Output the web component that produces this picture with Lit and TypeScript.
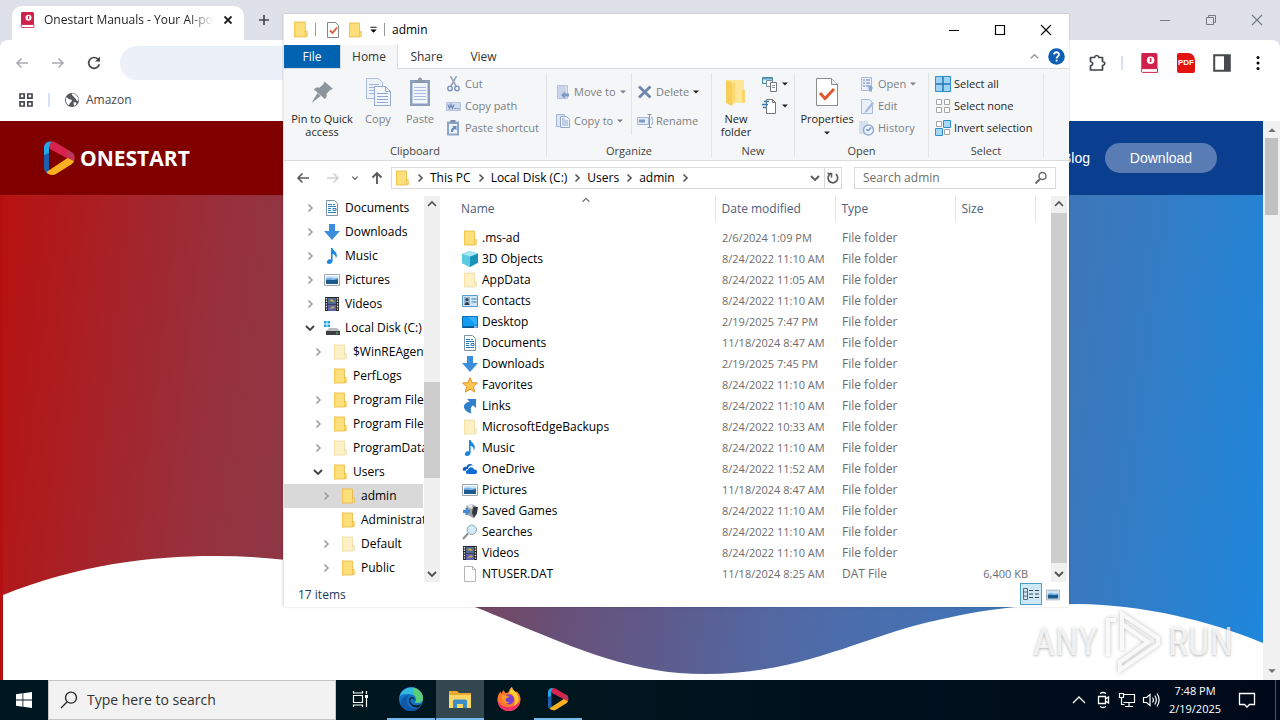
import { LitElement, html, css, svg, nothing } from "lit";
import { customElement } from "lit/decorators.js";
import { classMap } from "lit/directives/class-map.js";

/* ---------- icons, each drawn in its own view box ---------- */
const folder = (a: string, b: string, c: string) => svg`
  <path d="M2 1h10.500v14H2z" fill="${a}"/>
  <path d="M2 15V1h1.200v14z" fill="${b}"/>
  <path d="M12.500 9.500h1.800v5.200h-1.800z" fill="${a}" stroke="${c}" stroke-width=".7"/>
  <path d="M2 1h10.500v9M2 15h10.500" fill="none" stroke="${c}" stroke-width=".8"/>`;

const film = svg`<path d="M1 1h14v14H1z" fill="#222"/><path d="M4 2h8v6H4z" fill="#4d6d96"/><path d="M4 8.500h8V15H4z" fill="#5a62b0"/>
  <path d="M5 5l3-2 3 3zM5 13l4-3 2 2z" fill="#d9a93b"/>
  <path d="M2.500 2v13M13.500 2v13" stroke="#e8e8e8" stroke-width="1.400" stroke-dasharray="1.400 1.200"/>`;

const playMark = svg`
  <path d="M11 1.500C6 1 3 3.500 3 8v18c0 4 2 7 5 8V8z" fill="#22a7e8"/>
  <path d="M3 15v11c0 4 2 7 5 8V13z" fill="#1b5fae"/>
  <path d="M8.500 9c0-3.500 0-6 2.500-7.500 1.500 0 2.500.2 4 1L31 12.500c3 2 3.500 6 1.500 9l-7-3.500z" fill="#d8234f"/>
  <path d="M26 15l6.500 6.500c1.500-3 1-7-1.500-9l-4-2.500z" fill="#b9385a"/>
  <path d="M5.500 32l21-14 6.500 3c-.5 1.500-1.500 2.500-2.500 3.200L15 34c-3.500 1.800-7.500 1-9.500-2z" fill="#fbb01f"/>
  <path d="M8.500 9L25.500 18 8.500 28.500z" fill="var(--hole,#800000)"/>`;

const onestartManual = svg`<path d="M2 0h10.500q1.500 0 1.500 1.500V13H1V1.500Q1 0 2 0z" fill="#cf2149"/>
  <path d="M2 12.500h12v3H2q-1-.2-1-1.500t1-1.500z" fill="#fff" stroke="#cf2149" stroke-width=".8"/>
  <circle cx="8.500" cy="5.800" r="3" fill="#fff"/><path d="M8.500 4v3.200" stroke="#cf2149" stroke-width="1.200"/>`;

const icons: Record<string, [string, unknown]> = {
  folder: ["0 0 16 16", folder("#ffdf7c", "#f5c84c", "#e8b93c")],
  folderPale: ["0 0 16 16", folder("#fdf0c4", "#f6e4a8", "#eadba6")],
  documents: ["0 0 16 16", svg`<path d="M2.500 .5h8l3 3v12h-11z" fill="#fff" stroke="#7e93a6"/><path d="M4 4.500h4M4 6.500h8M4 10.500h3M4 12.500h8M9 4.500h2" stroke="#2a80bd"/><path d="M4 8.500h3M9 8.500h3v2H9z" stroke="#2a80bd" fill="none"/>`],
  downloads: ["0 0 16 16", svg`<path d="M5 0h6v7h5l-8 9-8-9h5z" fill="#3b8ede"/>`],
  music: ["0 0 16 16", svg`<path d="M7 0h1.600c.4 2.800 4.400 3.500 4.200 7.600 0 1.300-.6 2.400-1.200 3.200.4-2.800-.4-4.200-3-5V13c0 2-1.800 3-3.600 3S2.600 14.800 3 13.200c.5-1.700 2.400-2.300 4-1.900z" fill="#1b87e0"/>`],
  pictures: ["0 0 16 16", svg`<path d="M.5 2.500h15v11H.5z" fill="#fff" stroke="#9aa3ab"/><path d="M2 4h12v8H2z" fill="#7fb9ee"/><path d="M2 8c4-1 6 1 12-1v5H2z" fill="#1d5b8f"/><path d="M2 6q4-1 7 0 3 .8 5-.5V4H2z" fill="#cfe5f7"/>`],
  videos: ["0 0 16 16", film],
  disk: ["0 0 16 16", svg`<path d="M0 1h2.600v2.600H0zM3.400 1H6v2.600H3.400zM0 4.400h2.600V7H0zM3.400 4.400H6V7H3.400z" fill="#1aa7e6"/><path d="M5 8h8l3 3H2z" fill="#b8bcc0"/><path d="M2 11h14v4H2z" fill="#3c4043"/><path d="M12 12.500h2v1h-2z" fill="#5be05b"/>`],
  cube: ["0 0 16 16", svg`<path d="M0 3l7-3 9 2.500v9L8 16 0 12z" fill="#35b8d6"/><path d="M0 3l8 2.500V16L0 12z" fill="#59cbe0"/><path d="M8 5.500l8-3v9L8 16z" fill="#1a93b8"/><path d="M0 3l7-3 9 2.500-8 3z" fill="#a5e6f2"/>`],
  contacts: ["0 0 16 16", svg`<path d="M.5 2.500h15v11H.5z" fill="#cfe6f8" stroke="#5b9bd1"/><path d="M2 4h6v8H2z" fill="#8fb7d6"/><circle cx="5" cy="6.500" r="1.600" fill="#444"/><path d="M2.500 12q2.500-6 5 0z" fill="#333"/><path d="M9.500 6h5M9.500 9h5" stroke="#3a7db8"/>`],
  desktop: ["0 0 16 16", svg`<path d="M.5 2.500h15v11H.5z" fill="#139af2" stroke="#0b6cb3"/><path d="M1 13h14" stroke="#0a3a6a"/><path d="M6 3h9v9z" fill="#35b0fb"/><path d="M12 13h3" stroke="#fff"/>`],
  star: ["0 0 16 16", svg`<path d="M8 .6l2.200 5 5.300.4-4.100 3.600 1.300 5.500L8 12.200l-4.700 2.900 1.300-5.500L.5 6l5.300-.4z" fill="#fcc64f" stroke="#dd9430"/>`],
  links: ["0 0 16 16", svg`<path d="M5 1h9v9l-3-2.800c-2.500 1.500-3 4.500-1.500 8.300C3.500 14 .5 9.500 2.500 6.500 3.700 4.700 5.800 4 7.700 3.700z" fill="#2f7fcb"/>`],
  onedrive: ["0 0 16 16", svg`<path d="M1 9.500C0 6.500 3 5 4.500 6c.5-3.500 5-4 6.500-1.500-4-.5-5 2-5 3.500-1.500 0-2.500.8-2.500 2z" fill="#0f5fc0"/><path d="M6 13c-3 0-3-4 0-4 .5-3.500 5-3.500 6-.5 4-.5 4 4.500 1 4.500z" fill="#0f6cd3"/>`],
  games: ["0 0 16 16", svg`<path d="M4 3l5-2 5 2 1 8-4 4-5-3z" fill="#9aa0a6"/><path d="M5 2l5-1 1 5-4-1z" fill="#e4e7ea"/><path d="M11 4l5 0-1 6-3 5-2-5z" fill="#35393d"/><path d="M1 7h2.500V5H6v2h2v3H6v2H3.500v-2H1z" fill="#3d8ed6"/>`],
  search: ["0 0 16 16", svg`<path d="M1 15l5-5.500" stroke="#8a8f95" stroke-width="2"/><circle cx="9.800" cy="5.800" r="4.700" fill="#d2ecfa" stroke="#8fa6b6"/>`],
  file: ["0 0 16 16", svg`<path d="M2.500 .5h8l3 3v12h-11z" fill="#fff" stroke="#a3a3a3" stroke-width=".8"/><path d="M10.500 .5v3h3" fill="none" stroke="#a3a3a3" stroke-width=".8"/>`],

  chevRight: ["0 0 12 12", svg`<path d="M4.500 2.500L8 6 4.500 9.500" fill="none" stroke="currentColor" stroke-width="1.700"/>`],
  chevDown: ["0 0 12 12", svg`<path d="M2 4l4 4 4-4" fill="none" stroke="currentColor" stroke-width="1.900"/>`],
  chevUp: ["0 0 12 12", svg`<path d="M2 8l4-4 4 4" fill="none" stroke="currentColor" stroke-width="1.600"/>`],
  caret: ["0 0 8 8", svg`<path d="M1 2.500h6L4 5.500z" fill="currentColor"/>`],
  caretUp: ["0 0 8 8", svg`<path d="M1 5.500h6L4 2.500z" fill="currentColor"/>`],
  arrowLeft: ["0 0 16 16", svg`<path d="M14 8H3M7.500 3.500L3 8l4.500 4.500" fill="none" stroke="currentColor" stroke-width="1.600"/>`],
  arrowRight: ["0 0 16 16", svg`<path d="M2 8h11M8.500 3.500L13 8l-4.500 4.500" fill="none" stroke="currentColor" stroke-width="1.600"/>`],
  arrowUp: ["0 0 16 16", svg`<path d="M8 14V3M3.500 7.500L8 3l4.500 4.500" fill="none" stroke="currentColor" stroke-width="1.900"/>`],
  refresh: ["0 0 16 16", svg`<path d="M5.500 3.800A4.800 4.800 0 1 0 10.800 4.200" fill="none" stroke="currentColor" stroke-width="1.700"/><path d="M2.500 3.500h4v4" fill="none" stroke="currentColor" stroke-width="1.600"/>`],
  reload: ["0 0 16 16", svg`<path d="M13.300 9.200A5.400 5.400 0 1 1 12 4.200l1.500 1.600" fill="none" stroke="currentColor" stroke-width="1.700"/><path d="M14 1.500v5H9z" fill="currentColor"/>`],
  glass: ["0 0 16 16", svg`<path d="M2.500 13.500L7 9" stroke="currentColor" stroke-width="2.200"/><circle cx="9.500" cy="6" r="3.500" fill="none" stroke="currentColor" stroke-width="1.500"/>`],
  minimize: ["0 0 12 12", svg`<path d="M1 6.500h10" stroke="currentColor"/>`],
  maximize: ["0 0 12 12", svg`<path d="M1.500 1.500h9v9h-9z" fill="none" stroke="currentColor" stroke-width="1.200"/>`],
  restore: ["0 0 12 12", svg`<path d="M1.500 3.500h7v7h-7zM3.500 3.500v-2h7v7h-2" fill="none" stroke="currentColor"/>`],
  close: ["0 0 12 12", svg`<path d="M1 1l10 10M11 1L1 11" stroke="currentColor" stroke-width="1.200"/>`],
  tabClose: ["0 0 12 12", svg`<path d="M2.500 2.500l7 7M9.500 2.500l-7 7" stroke="currentColor" stroke-width="1.800"/>`],
  plus: ["0 0 12 12", svg`<path d="M6 1v10M1 6h10" stroke="currentColor" stroke-width="1.700"/>`],
  help: ["0 0 16 16", svg`<circle cx="8" cy="8" r="7.800" fill="#0f5fb4"/><path d="M5.700 6.200c0-3 4.800-2.900 4.700 0 0 1.600-2.300 1.800-2.300 3.600M8.100 11v1.800" fill="none" stroke="#fff" stroke-width="1.700"/>`],
  qatCheck: ["0 0 16 16", svg`<path d="M2.500 .5h8l3 3v12h-11z" fill="#fff" stroke="#858585"/><path d="M5 8.500l2.500 2.500L12 5.500" fill="none" stroke="#dd5a30" stroke-width="1.800"/>`],
  qatMenu: ["0 0 10 10", svg`<path d="M1.500 2.500h7" stroke="currentColor"/><path d="M1.500 5h7L5 8.500z" fill="currentColor"/>`],

  pin: ["0 0 32 32", svg`<path d="M18.500 5.500L27 13l-3 1-3.500 4c.7 2.200 0 3.800-1.700 5L8 13.500c1.200-1.800 3-2.300 5.200-1.700l4-3.300z" fill="#8d959c"/><path d="M11.500 17l3.200 3L5.500 27z" fill="#8d959c"/>`],
  copy: ["0 0 32 32", svg`<path d="M4.500 2.500h12l4 4v16h-16z" fill="#eef3fb" stroke="#a9bbdc"/><path d="M7 8.500h10M7 11.500h10M7 14.500h10M7 17.500h10" stroke="#9db2dc"/><path d="M12.500 10.500h11l5 5v14h-16z" fill="#f3f7fd" stroke="#93a9cf"/><path d="M23.500 10.500v5h5" fill="none" stroke="#93a9cf"/><path d="M15 17.500h11M15 20.500h11M15 23.500h11M15 26.500h11" stroke="#8ea6d6"/>`],
  paste: ["0 0 32 32", svg`<path d="M6 4h20v26H6z" fill="#8b9fc0"/><path d="M8.500 7h15v20.500h-15z" fill="#f1f5fc"/><path d="M11 7V4.500h3q0-3 2-3t2 3h3V7z" fill="#8b97a8"/><path d="M10 11.500h12M10 14.500h12M10 17.500h12M10 20.500h12M10 23.500h12" stroke="#a7bbe2"/>`],
  cut: ["0 0 16 16", svg`<path d="M4.500 0l5.500 10M10.500 0L5 10" stroke="#98a8bb" stroke-width="1.600"/><circle cx="4" cy="12.500" r="2.200" fill="none" stroke="#7f97c0" stroke-width="1.500"/><circle cx="11" cy="12.500" r="2.200" fill="none" stroke="#7f97c0" stroke-width="1.500"/>`],
  copyPath: ["0 0 16 16", svg`<path d="M.5 4.500h14v8H.5z" fill="#cfdcf0" stroke="#b3c2dd"/><path d="M2 6.500l1.500 4 1.500-4 1.500 4L8 6.500M8.500 10.500h2M11 10.500h1M12.500 10.500h1" fill="none" stroke="#6f88b5" stroke-width="1.200"/>`],
  pasteShort: ["0 0 16 16", svg`<path d="M1 1.500h12v14H1z" fill="#8fa6cc"/><path d="M3 4h8v9.500H3z" fill="#f0f5fc"/><path d="M4.500 0h5v2.500h-5z" fill="#7d8ea8"/><path d="M5 12c0-3 .5-4 2.500-4.500L6 6h4.500v4.500L9 9c-1.500.5-2 1.500-2 3z" fill="#6788c2"/>`],
  moveTo: ["0 0 16 16", svg`<path d="M2 1h9.500v14H2z" fill="#c9d5ea"/><path d="M2.500 1.500h10v13h-10z" fill="none" stroke="#b3c2dd"/><path d="M14 9.500v3h-4V15L6 11l4-3.500v2z" fill="#7f9acb"/>`],
  copyTo: ["0 0 16 16", svg`<path d="M1.500 1.500h8v12h-8z" fill="#dbe5f3" stroke="#a4b6d6"/><path d="M5.500 3.500h6l3 3v8h-9z" fill="#eef3fb" stroke="#94a9d0"/><path d="M7 8h6M7 10h6M7 12h6M7 6h3" stroke="#94a9d0"/>`],
  delete: ["0 0 16 16", svg`<path d="M2 2.500l11.500 11M13.500 2.500L2 13.500" stroke="#6f87ac" stroke-width="2.900"/>`],
  rename: ["0 0 16 16", svg`<path d="M.5 4.500h11v7H.5z" fill="#e4ecf8" stroke="#a4b6d6"/><path d="M2 6.500h6v3H2z" fill="#7f9acb"/><path d="M12.500 1.500v13M10.500 1.500h4M10.500 14.500h4" stroke="#8193b5"/><path d="M14 4.500h1.500v7H14" fill="none" stroke="#a4b6d6"/>`],
  newFolder: ["0 0 32 32", svg`<path d="M6 4h18v23H9L6 25z" fill="#ffe596"/><path d="M6 4l6 2.500v23.500l-6-3z" fill="#f7cd5c"/><path d="M12 6.500h3V25l-3 5z" fill="#ffd970"/><path d="M22 14h3v12.500h-3z" fill="#fbd568"/>`],
  newItem: ["0 0 16 16", svg`<path d="M.5 1.500h10v6H.5z" fill="#e3f1f7" stroke="#3c84a6"/><path d="M.5 1.500h10v2H.5z" fill="#5b9cb9"/><path d="M4.500 4.500h6v6h-6z" fill="#fff" stroke="#6f8fa1"/><path d="M8.500 6.500h6v9h-6z" fill="#fff" stroke="#777"/><path d="M10 9.500h3M10 11.500h3" stroke="#999"/>`],
  easyAccess: ["0 0 16 16", svg`<path d="M4.500 1.500h6l3 3v11h-9z" fill="#fff" stroke="#777"/><path d="M10.500 1.500v3h3" fill="none" stroke="#777"/><path d="M2 3.500h5M0 6.500h6M1 9.500h3" stroke="#2a7db8" stroke-width="1.400"/>`],
  properties: ["0 0 32 32", svg`<path d="M5.500 2.500h15l6 6v21h-21z" fill="#fff" stroke="#8c8c8c"/><path d="M20.500 2.500v6h6" fill="#eee" stroke="#8c8c8c"/><path d="M9 17l5 5.500 9-9.500" fill="none" stroke="#dd5a30" stroke-width="3"/>`],
  open: ["0 0 16 16", svg`<path d="M2.500 1.500h10v13h-10z" fill="#eaf0fa" stroke="#a9bbdc"/><path d="M4 4h2M4 7h2M4 10h2M7 4h4M7 7h4M7 10h4" stroke="#8ea6d6" stroke-width="1.500"/><path d="M10 15.500v-3H8.500l3-3.500 3 3.500H13v3z" fill="#8ea6d6"/>`],
  edit: ["0 0 16 16", svg`<path d="M2.500 1.500h8l3 3v11h-11z" fill="#eaf0fa" stroke="#a9bbdc"/><path d="M6 13l7-9 2 1.500-7 8.500-2.500 1z" fill="#a9bbdc"/>`],
  history: ["0 0 16 16", svg`<path d="M0 1h9v13H0z" fill="#d5dfee"/><circle cx="9.500" cy="10" r="5" fill="#eef3fb" stroke="#93a9cf" stroke-width="1.500"/><path d="M12 7.500L9.500 10.500 7 9.500" fill="none" stroke="#7f9acb" stroke-width="1.500"/>`],
  selAll: ["0 0 16 16", svg`<path d="M.5 .5h15v15H.5z" fill="#9fd3f5" stroke="#2f8fd0"/><path d="M8 1v14M1 8h14" stroke="#2777b5" stroke-width="1.500"/>`],
  selNone: ["0 0 16 16", svg`<path d="M1.500 1.500h5v5h-5zM9.500 1.500h5v5h-5zM1.500 9.500h5v5h-5zM9.500 9.500h5v5h-5z" fill="#fff" stroke="#a5a5a5"/>`],
  selInvert: ["0 0 16 16", svg`<path d="M1.500 1.500h5v5h-5zM9.500 9.500h5v5h-5z" fill="#fff" stroke="#a5a5a5"/><path d="M8.500 .5h7v7h-7zM.5 8.500h7v7h-7z" fill="#a8d8f7" stroke="#2f8fd0"/>`],
  details: ["0 0 16 16", svg`<path d="M.5 2.500h4v11h-4zM.5 6h4M.5 10h4" fill="none" stroke="#667"/><path d="M6 4.500h4M12 4.500h4M6 8h4M12 8h4M6 11.500h4M12 11.500h4" stroke="#445"/>`],

  manual: ["0 0 16 16", onestartManual],
  puzzle: ["0 0 20 20", svg`<path d="M3.500 4.500h4q.5-2 2.200-2t2.300 2h3.500v4q2.300.5 2.300 2t-2.300 2v4.500h-12v-4q2.200-.8 2.200-2.300t-2.200-2.200z" fill="none" stroke="#3f4246" stroke-width="1.700" stroke-linejoin="round"/>`],
  side: ["0 0 18 18", svg`<path d="M1.200 1.200h15.600v15.600H1.200z" fill="#fff" stroke="#46494d" stroke-width="2"/><path d="M11 1h6v16h-6z" fill="#46494d"/>`],
  dots: ["0 0 16 16", svg`<circle cx="8" cy="2.500" r="1.500"/><circle cx="8" cy="8" r="1.500"/><circle cx="8" cy="13.500" r="1.500"/>`],
  apps: ["0 0 16 16", svg`<path d="M2 2h4.200v4.200H2zM9.800 2H14v4.200H9.800zM2 9.800h4.200V14H2zM9.800 9.800H14V14H9.800z" fill="none" stroke="#46494d" stroke-width="1.700"/>`],
  globe: ["0 0 16 16", svg`<circle cx="8" cy="8" r="7" fill="#55585c"/><path d="M2 5.500c2 0 2.500 2 4.500 2S8 10 6.500 10.500 6 13.500 4.500 13 1.500 10 2 5.500zM8 1.500c-.5 2.500 1.500 2 2 3.500s2 1 2.500 3 1.500 1 2 0c0-3-2.500-6.500-6.500-6.500zM9.500 10.500c1.500-.5 3 0 3 1s-1.500 2.200-2.500 2.500z" fill="#fff"/>`],
  play: ["0 0 36 36", playMark],
  winLogo: ["0 0 16 16", svg`<path d="M0 2.200l6.500-.9v6.300H0zM7.300 1.200L16 0v7.600H7.300zM0 8.400h6.500v6.300L0 13.800zM7.300 8.400H16V16l-8.700-1.200z" fill="#fff"/>`],
  glassThin: ["0 0 18 18", svg`<path d="M1 17l6-6" stroke="#222" stroke-width="1.300"/><circle cx="11" cy="6.700" r="5.500" fill="none" stroke="#222" stroke-width="1.300"/>`],
  taskView: ["0 0 18 18", svg`<path d="M2.500 5.500h9v7h-9zM2.500 1v2h9V1M2.500 17v-2h9v2M15.500 1v3M15.500 8v9" fill="none" stroke="#fff" stroke-width="1.200"/><path d="M14 5h3v3h-3z" fill="#fff"/>`],
  edge: ["0 0 24 24", svg`<circle cx="12" cy="12" r="12" fill="#1374c4"/><path d="M.5 9.500C3 1.500 11-1 17 1.500c5.500 2.300 8 8 6.700 11.500-1 3-4.700 3.500-7.700 2.500 2-2.500 1.300-7-3.500-8C7.500 6.500 3 7 .5 9.500z" fill="#35b8de"/><path d="M14 .4C20.500 1.500 24 7 24 11c0 4.500-4.500 5.700-8 4.500 2-2.500 1.500-6-1-7.500z" fill="#58cf76"/><path d="M8 13c-.5 6 5 10 12.500 7.500C15 26.500 5 24.500 2 18.500.5 14 4 8.500 11 8.200 9.500 9 8 11 8 13z" fill="#0f58a8"/><path d="M13 11c-2.500 1-2.500 4 0 6 2.500 2 6 1.700 9 .3-1 1.800-1.700 2.300-2.500 3.200C14 21 9.500 17 10 12.500q.5-3 3.500-2.500 2.500 1 1.700 3.500Q15 11.500 13 11z" fill="#06131c"/>`],
  explorer: ["0 0 24 24", svg`<path d="M1 4h8l2 2h12v15H1z" fill="#eaa92c"/><path d="M1 8h22v13H1z" fill="#fcd768"/><path d="M5 21v-7q0-1.500 1.500-1.500h11Q19 12.500 19 14v7h-4v-4H9v4z" fill="#3d8ec6"/>`],
  firefox: ["0 0 24 24", svg`<path d="M12 24C5 24 .5 19 .5 12.500.5 9 2 6 3.500 4.500l.7 2.200L6.500 3l2 3c2 0 3-.5 3.500-2 .6-1.700 1.500-3 3-4 0 2.500 2 3.500 3.500 5l1.500-.5C22.500 7 23.800 10 23.500 13 23 19.500 18 24 12 24z" fill="#ff7a2a"/><path d="M15 0c0 3.500 6 5 6.500 11 .3 4-2 7-5 8.500C20 13 17 7 12.500 6.500 12.700 4 13.500 1.500 15 0z" fill="#ffcf33"/><path d="M12 24C5 24 .5 19 .5 12.500c2 5 6 7.500 10.500 7.500 5 0 8-2 12-5C21.500 20.500 17 24 12 24z" fill="#f0306a"/><circle cx="12" cy="12.500" r="5" fill="#7a3fd0"/><path d="M5 8.500c3-1 5 .5 7.500 1-1 1.500-3.500 1-4 3 0 2 2 3 4 2.500-3 3.500-8 0-7.500-6.500z" fill="#ff9a2e"/>`],
  trayUp: ["0 0 18 18", svg`<path d="M3 12l6-6 6 6" fill="none" stroke="#fff" stroke-width="1.300"/>`],
  meet: ["0 0 18 18", svg`<path d="M4.500 5.500h7v7h-7zM11.500 8l3-2v6l-3-2M6 2.500q3-2 6 0M6 15.500q3 2 6 0" fill="none" stroke="#fff" stroke-width="1.300"/>`],
  network: ["0 0 18 18", svg`<path d="M5.500 3.500h11v8h-11M11 11.500v4M7 15.500h8M1.500 2.500h4v4h-4zM3.500 6.500v7h3" fill="none" stroke="#fff" stroke-width="1.200"/>`],
  sound: ["0 0 18 18", svg`<path d="M1.500 6.500h3l3.500-3v11l-3.500-3h-3zM10.500 6.500q1.800 2.500 0 5M12.800 4.500q3 4.500 0 9M15 2.500q4.200 6.500 0 13" fill="none" stroke="#fff" stroke-width="1.200"/>`],
  note: ["0 0 18 18", svg`<path d="M1.500 2.500h15v11h-5L9 16l-2.500-2.500h-5z" fill="none" stroke="#fff" stroke-width="1.300"/>`],
};

const icon = (name: string, size = 16) =>
  html`<svg width=${size} height=${size} viewBox=${icons[name][0]} aria-hidden="true">${icons[name][1]}</svg>`;

const base = css`
  * { box-sizing: border-box; }
  svg { display: block; flex: none; }
  button, input {
    font: inherit; color: inherit; background: none; border: 0; padding: 0; margin: 0;
  }
  button { display: flex; align-items: center; justify-content: center; white-space: nowrap; }
  input { outline: 0; min-width: 0; }
  input::placeholder { color: inherit; opacity: 1; }
  a { color: inherit; text-decoration: none; }
`;

/* ---------- browser ---------- */
@customElement("browser-window")
class BrowserWindow extends LitElement {
  static styles = [base, css`
    :host { display: flex; flex-direction: column; height: 100%; background: #dee1e9; font: 12px/16px "Open Sans", sans-serif; color: #1f1f1f; }
    .strip { display: flex; height: 40px; align-items: flex-end; padding-left: 12px; }
    .tab { display: flex; align-items: center; width: 232px; height: 34px; padding: 0 10px 6px 8px; gap: 8px; background: #fff; border-radius: 10px 10px 0 0; }
    .title { flex: 1; white-space: nowrap; overflow: hidden; -webkit-mask-image: linear-gradient(90deg, #000 85%, transparent); mask-image: linear-gradient(90deg, #000 85%, transparent); }
    .new { width: 40px; height: 40px; color: #46494d; }
    .controls { display: flex; margin-left: auto; color: #777b80; }
    .controls button { width: 46px; height: 40px; }
    .tools { display: flex; align-items: center; height: 46px; padding: 0 13px 0 6px; color: #46494d; background: #fff; border-radius: 8px 8px 0 0; }
    .tools .nav { width: 32px; height: 32px; margin-right: 4px; }
    .tools .off { color: #a8abaf; }
    .omni { flex: 1; height: 34px; border-radius: 17px; background: #ebf0f9; padding: 0 20px; margin: 0 28px 0 6px; }
    .ext { display: flex; align-items: center; gap: 18px; }
    .ext button { width: 18px; height: 24px; }
    .bar { width: 2px; height: 14px; background: #d3e0f5; }
    .ext .bar { margin-left: -3px; }
    .ext .pdf { width: 18px; height: 20px; background: #e3140f; color: #fff; font: bold 8px/20px "Liberation Sans", sans-serif; border-radius: 2px 7px 2px 2px; }
    .marks { display: flex; align-items: center; height: 35px; padding: 0 18px 8px; gap: 14px; color: #46494d; background: #fff; }
    .marks a { display: flex; align-items: center; gap: 6px; }
    .view { flex: 1; min-height: 0; display: flex; }
    .page { flex: 1; display: flex; flex-direction: column; background: #fff; }
    .head { display: flex; align-items: center; height: 74px; padding: 0 46px 0 41px; color: #fff; background: linear-gradient(90deg, #800000 22%, #0a3f8f 82%); font: 14px/20px "Liberation Sans", sans-serif; }
    .brand { display: flex; align-items: center; gap: 3px; font: 700 21px/24px "Open Sans", sans-serif; }
    .blog { margin-left: auto; margin-right: 15px; }
    .dl { width: 112px; height: 30px; border-radius: 15px; background: rgba(255, 255, 255, .32); }
    .hero { flex: 1; min-height: 0; display: flex; background: linear-gradient(97deg, #b81210 0%, #98303c 17%, #7e4256 37%, #685078 46%, #4f6ba8 65%, #3a78bc 84%, #1d87dc 100%); border-left: 3px solid #b3100f; }
    .hero svg { flex: 1; width: 100%; height: 100%; min-width: 0; }
    .scroll { width: 17px; display: flex; flex-direction: column; align-items: center; justify-content: space-between; background: #f1f1f1; padding: 4px 0; color: #707070; }
    .thumb { width: 13px; height: 77px; background: #c1c1c1; margin: 3px 0 auto; }
  `];
  render() {
    return html`
      <div class="strip">
        <div class="tab">${icon("manual", 16)}<span class="title">Onestart Manuals - Your AI-powered</span>
          <button aria-label="Close tab">${icon("tabClose", 12)}</button></div>
        <button class="new" aria-label="New tab">${icon("plus", 12)}</button>
        <div class="controls">
          <button aria-label="Minimize">${icon("minimize", 12)}</button>
          <button aria-label="Restore">${icon("restore", 12)}</button>
          <button aria-label="Close">${icon("close", 12)}</button>
        </div>
      </div>
      <div class="tools">
        <button class="nav off" aria-label="Back">${icon("arrowLeft", 16)}</button>
        <button class="nav off" aria-label="Forward">${icon("arrowRight", 16)}</button>
        <button class="nav" aria-label="Reload">${icon("reload", 16)}</button>
        <input class="omni" aria-label="Address">
        <div class="ext">
          <button aria-label="Extensions">${icon("puzzle", 20)}</button>
          <span class="bar"></span>
          <button aria-label="Manuals">${icon("manual", 20)}</button>
          <button class="pdf" aria-label="PDF">PDF</button>
          <button aria-label="Side panel">${icon("side", 18)}</button>
          <button aria-label="Menu">${icon("dots", 16)}</button>
        </div>
      </div>
      <div class="marks">
        <button aria-label="Apps">${icon("apps", 16)}</button><span class="bar"></span>
        <a href="#">${icon("globe", 16)}Amazon</a>
      </div>
      <div class="view">
        <main class="page">
          <header class="head">
            <a class="brand" href="#">${icon("play", 36)}ONESTART</a>
            <a class="blog" href="#">Blog</a>
            <button class="dl">Download</button>
          </header>
          <div class="hero">
            <svg viewBox="0 0 1260 485" preserveAspectRatio="none">
              <path fill="#fff" d="M0 400C75 370 145 361 212 361C300 361 380 379 472 412C560 447 620 479 702 479C800 479 860 441 935 425C985 413 1030 409 1075 409C1140 410 1205 425 1260 448V485H0z"/>
            </svg>
          </div>
        </main>
        <div class="scroll">${icon("caretUp", 10)}<div class="thumb"></div>${icon("caret", 10)}</div>
      </div>`;
  }
}

/* ---------- file explorer ---------- */
type TreeRow = [label: string, icon: string, level: number, state: "closed" | "open" | "leaf"];
const tree: TreeRow[] = [
  ["Documents", "documents", 0, "closed"], ["Downloads", "downloads", 0, "closed"],
  ["Music", "music", 0, "closed"], ["Pictures", "pictures", 0, "closed"],
  ["Videos", "videos", 0, "closed"], ["Local Disk (C:)", "disk", 0, "open"],
  ["$WinREAgent", "folderPale", 1, "closed"], ["PerfLogs", "folder", 1, "leaf"],
  ["Program Files", "folder", 1, "closed"], ["Program Files (x86)", "folder", 1, "closed"],
  ["ProgramData", "folderPale", 1, "closed"], ["Users", "folder", 1, "open"],
  ["admin", "folder", 2, "closed"], ["Administrator", "folder", 2, "leaf"],
  ["Default", "folderPale", 2, "closed"], ["Public", "folder", 2, "closed"],
];
const files: [string, string, string, string?, string?][] = [
  [".ms-ad", "folder", "2/6/2024 1:09 PM"],
  ["3D Objects", "cube", "8/24/2022 11:10 AM"],
  ["AppData", "folderPale", "8/24/2022 11:05 AM"],
  ["Contacts", "contacts", "8/24/2022 11:10 AM"],
  ["Desktop", "desktop", "2/19/2025 7:47 PM"],
  ["Documents", "documents", "11/18/2024 8:47 AM"],
  ["Downloads", "downloads", "2/19/2025 7:45 PM"],
  ["Favorites", "star", "8/24/2022 11:10 AM"],
  ["Links", "links", "8/24/2022 11:10 AM"],
  ["MicrosoftEdgeBackups", "folderPale", "8/24/2022 10:33 AM"],
  ["Music", "music", "8/24/2022 11:10 AM"],
  ["OneDrive", "onedrive", "8/24/2022 11:52 AM"],
  ["Pictures", "pictures", "11/18/2024 8:47 AM"],
  ["Saved Games", "games", "8/24/2022 11:10 AM"],
  ["Searches", "search", "8/24/2022 11:10 AM"],
  ["Videos", "videos", "8/24/2022 11:10 AM"],
  ["NTUSER.DAT", "file", "11/18/2024 8:25 AM", "DAT File", "6,400 KB"],
];

@customElement("explorer-window")
class ExplorerWindow extends LitElement {
  static styles = [base, css`
    :host { display: flex; flex-direction: column; background: #fff; color: #000; font: 12px/16px "Open Sans", sans-serif; border-left: 1px solid #f3e4e4; }
    .titlebar { display: flex; align-items: center; height: 31px; padding-left: 8px; }
    .qat { display: flex; align-items: center; gap: 6px; margin-right: 4px; }
    .qat i { width: 1px; height: 13px; background: #999; margin-right: 3px; }
    .controls { display: flex; margin-left: auto; }
    .controls button { width: 46px; height: 31px; }
    .tabs { display: flex; height: 24px; border-bottom: 1px solid #dadbdc; }
    .tabs button { height: 24px; width: 57px; color: #333; }
    .tabs .file { width: 56px; background: #0063b1; color: #fff; height: 23px; }
    .tabs .home { width: 58px; background: #f5f6f7; border: 1px solid #dadbdc; border-width: 0 1px; }
    .tabs .end { display: flex; align-items: center; gap: 8px; margin: 0 4px 0 auto; color: #9a9a9a; }
    .ribbon { display: flex; height: 92px; background: #f5f6f7; border-bottom: 1px solid #dadbdc; padding-top: 4px; font-size: 11px; }
    .group { height: 84px; border-right: 1px solid #e2e3e4; }
    .body { display: flex; height: 70px; color: #262626; }
    .cap { text-align: center; color: #444; }
    .body .off { color: #7a7f86; }
    .big { flex-direction: column; justify-content: flex-start; white-space: normal; line-height: 13px; padding-top: 3px; gap: 4px; width: 42px; }
    .big.wide { width: 64px; }
    .big.pin { width: 70px; }
    .col { display: flex; flex-direction: column; align-items: flex-start; }
    .col button { height: 22px; gap: 3px; }
    .inset { padding-left: 5px; }
    .loose { padding-top: 8px; gap: 7px; }
    .split { width: 77px; border-right: 1px solid #e2e3e4; height: 62px; }
    .dark { color: #222; display: flex; }
    .g1 { width: 262px; padding-left: 3px; } .g2 { width: 164px; padding-left: 8px; } .g3 { width: 82px; padding-left: 3px; }
    .g4 { width: 133px; } .g5 { width: 114px; padding-left: 6px; }
    .address { display: flex; align-items: center; height: 34px; padding: 0 13px 0 11px; color: #5b5b5b; }
    .go { width: 16px; margin-right: 14px; }
    .go.faint { color: #d0d0d0; margin-right: 10px; }
    .go.recent { width: 8px; margin-right: 10px; }
    .crumbs { flex: 1; display: flex; align-items: center; height: 22px; border: 1px solid #d9d9d9; margin: 0 12px 0 6px; padding-left: 2px; }
    .crumbs a { color: #000; }
    .crumbs > svg { margin: 0 4px; }
    .tail { display: flex; align-items: center; gap: 3px; margin-left: auto; }
    .re { width: 17px; height: 20px; border-left: 1px solid #d9d9d9; }
    .find { display: flex; align-items: center; width: 202px; height: 22px; border: 1px solid #d9d9d9; padding: 0 6px 0 8px; color: #6d6d6d; }
    .find input { flex: 1; }
    .main { flex: 1; min-height: 0; display: flex; overflow: hidden; padding: 1px 2px 0 0; }
    .tree { width: 140px; padding-right: 1px; overflow: hidden; }
    .row { display: flex; align-items: center; width: 100%; height: 24px; justify-content: flex-start; padding-left: 20px; gap: 5px; color: #a0a0a0; }
    .row svg:first-child { margin-right: 3px; }
    .row.l1 { padding-left: 28px; } .row.l2 { padding-left: 36px; }
    .row.open { color: #404040; }
    .row.leaf svg:first-child { visibility: hidden; }
    .row.sel { background: #d9d9d9; }
    .row span { color: #000; }
    .scroll { position: relative; display: flex; flex-direction: column; width: 16px; background: #f0f0f0; align-items: center; justify-content: space-between; padding: 2px 0; color: #505050; }
    .thumb { width: 100%; background: #cdcdcd; }
    .thumb.t1 { height: 96px; margin: auto 0 90px; } .thumb.t2 { height: 350px; margin: 3px 0 auto; }
    .list { flex: 1; min-width: 0; padding-left: 15px; overflow: hidden; }
    table { border-collapse: collapse; table-layout: fixed; width: 580px; }
    th { height: 26px; padding: 0 0 0 6px; font-weight: normal; text-align: left; color: #4c607a; border-right: 1px solid #e5e5e5; }
    th div { display: flex; align-items: center; }
    th .sort { margin: -20px auto 0 86px; height: 8px; color: #777; }
    thead tr:last-child { height: 5px; }
    td { height: 21px; padding: 0 7px; color: #6d6d6d; white-space: nowrap; }
    td.name div { display: flex; gap: 4px; align-items: center; color: #000; }
    td.num { font-size: 11px; }
    td.size { text-align: right; }
    .c1 { width: 260px; } .c2 { width: 120px; } .c3 { width: 120px; } .c4 { width: 80px; }
    .status { display: flex; align-items: center; height: 25px; padding: 0 9px 0 14px; color: #1e395b; }
    .status .on { width: 22px; height: 22px; margin: 0 4px 2px auto; border: 1px solid #4a9fc4; background: #cde8f6; }
  `];
  private small(ic: string, label: string, off = true, menu = false) {
    const caret = ic === "delete" ? html`<span class="dark">${icon("caret", 8)}</span>` : icon("caret", 8);
    return html`<button class=${classMap({ off })}>${icon(ic, 16)}${label}${menu ? caret : nothing}</button>`;
  }
  render() {
    return html`
      <div class="titlebar">
        <div class="qat">${icon("folder", 17)}<i></i>${icon("qatCheck", 16)}${icon("folder", 16)}${icon("qatMenu", 9)}<i></i></div>
        admin
        <div class="controls">
          <button aria-label="Minimize">${icon("minimize", 12)}</button>
          <button aria-label="Maximize">${icon("maximize", 12)}</button>
          <button aria-label="Close">${icon("close", 12)}</button>
        </div>
      </div>
      <nav class="tabs">
        <button class="file">File</button><button class="home">Home</button><button>Share</button><button>View</button>
        <div class="end">${icon("chevUp", 11)}${icon("help", 17)}</div>
      </nav>
      <div class="ribbon">
        <div class="group"><div class="body g1">
          <button class="big pin">${icon("pin", 32)}<span>Pin to Quick access</span></button>
          <button class="big off">${icon("copy", 32)}Copy</button>
          <button class="big off">${icon("paste", 32)}Paste</button>
          <div class="col inset">${this.small("cut", "Cut")}${this.small("copyPath", "Copy path")}${this.small("pasteShort", "Paste shortcut")}</div>
        </div><div class="cap">Clipboard</div></div>
        <div class="group"><div class="body g2">
          <div class="col loose split">${this.small("moveTo", "Move to", true, true)}${this.small("copyTo", "Copy to", true, true)}</div>
          <div class="col loose inset">${this.small("delete", "Delete", true, true)}${this.small("rename", "Rename")}</div>
        </div><div class="cap">Organize</div></div>
        <div class="group"><div class="body g3">
          <button class="big">${icon("newFolder", 32)}New folder</button>
          <div class="col inset">${this.small("newItem", "", false, true)}${this.small("easyAccess", "", false, true)}</div>
        </div><div class="cap">New</div></div>
        <div class="group"><div class="body g4">
          <button class="big wide">${icon("properties", 32)}Properties${icon("caret", 8)}</button>
          <div class="col">${this.small("open", "Open", true, true)}${this.small("edit", "Edit")}${this.small("history", "History")}</div>
        </div><div class="cap">Open</div></div>
        <div class="group"><div class="body g5">
          <div class="col">${this.small("selAll", "Select all", false)}${this.small("selNone", "Select none", false)}${this.small("selInvert", "Invert selection", false)}</div>
        </div><div class="cap">Select</div></div>
      </div>
      <div class="address">
        <button class="go" aria-label="Back">${icon("arrowLeft", 16)}</button>
        <button class="go faint" aria-label="Forward">${icon("arrowRight", 16)}</button>
        <button class="go recent" aria-label="Recent">${icon("chevDown", 8)}</button>
        <button aria-label="Up">${icon("arrowUp", 16)}</button>
        <div class="crumbs">
          <button aria-label="Folder">${icon("folder", 16)}</button>
          ${["This PC", "Local Disk (C:)", "Users", "admin"].map((c) => html`${icon("chevRight", 12)}<a href="#">${c}</a>`)}${icon("chevRight", 12)}
          <div class="tail"><button aria-label="History">${icon("chevDown", 12)}</button><button class="re" aria-label="Refresh">${icon("refresh", 16)}</button></div>
        </div>
        <label class="find"><input placeholder="Search admin" aria-label="Search admin">${icon("glass", 16)}</label>
      </div>
      <div class="main">
        <nav class="tree">
          ${tree.map(([label, ic, level, state]) => html`
            <button class=${classMap({ row: true, [`l${level}`]: true, [state]: true, sel: label === "admin" })}>
              ${icon(state === "open" ? "chevDown" : "chevRight", 12)}${icon(ic, 16)}<span>${label}</span></button>`)}
        </nav>
        <div class="scroll">${icon("chevUp", 12)}<div class="thumb t1"></div>${icon("chevDown", 12)}</div>
        <div class="list">
          <table>
            <thead>
              <tr><th class="c1"><div>Name<span class="sort">${icon("chevUp", 10)}</span></div></th><th class="c2">Date modified</th><th class="c3">Type</th><th class="c4">Size</th></tr>
              <tr></tr>
            </thead>
            <tbody>${files.map(([name, ic, date, type = "File folder", size = ""]) => html`
              <tr><td class="name"><div>${icon(ic, 16)}${name}</div></td><td class="num">${date}</td><td>${type}</td><td class="num size">${size}</td></tr>`)}</tbody>
          </table>
        </div>
        <div class="scroll">${icon("chevUp", 12)}<div class="thumb t2"></div>${icon("chevDown", 12)}</div>
      </div>
      <div class="status">17 items
        <button class="on" aria-label="Details view">${icon("details", 16)}</button>
        <button aria-label="Large icons">${icon("pictures", 14)}</button>
      </div>`;
  }
}

/* ---------- taskbar ---------- */
@customElement("task-bar")
class TaskBar extends LitElement {
  static styles = [base, css`
    :host { display: flex; height: 40px; background: linear-gradient(90deg, #001721 0%, #00161f 45%, #00091a 100%); color: #fff; font: 12px/18px "Open Sans", sans-serif; }
    .start { width: 48px; }
    .find { display: flex; align-items: center; width: 288px; gap: 9px; padding: 0 11px; background: #f2f2f2; border: 1px solid #c4c4c4; color: #333; font-size: 14px; }
    .find input { flex: 1; }
    .apps { display: flex; gap: 1px; }
    .apps button { width: 48px; border-bottom: 2px solid transparent; --hole: #00161f; }
    .apps .view { margin-right: 2px; }
    .apps .run { border-color: #76b9ed; }
    .apps .on { background: #33474f; }
    .tray { display: flex; margin-left: auto; }
    .tray button { width: 24px; }
    .tray .clock { width: 64px; font-size: 11px; white-space: normal; text-align: center; }
    .tray .note { width: 40px; }
    .peek { width: 5px; margin-left: 8px; border-left: 1px solid #4a5560; }
  `];
  render() {
    return html`
      <button class="start" aria-label="Start">${icon("winLogo", 16)}</button>
      <label class="find">${icon("glassThin", 18)}<input placeholder="Type here to search" aria-label="Type here to search"></label>
      <div class="apps">
        <button class="view" aria-label="Task view">${icon("taskView", 18)}</button>
        <button class="run" aria-label="Edge">${icon("edge", 24)}</button>
        <button class="run on" aria-label="File Explorer">${icon("explorer", 24)}</button>
        <button aria-label="Firefox">${icon("firefox", 24)}</button>
        <button class="run" aria-label="OneStart">${icon("play", 24)}</button>
      </div>
      <div class="tray">
        <button aria-label="Hidden icons">${icon("trayUp", 18)}</button>
        <button aria-label="Meet now">${icon("meet", 18)}</button>
        <button aria-label="Network">${icon("network", 18)}</button>
        <button aria-label="Volume">${icon("sound", 18)}</button>
        <button class="clock">7:48 PM<br>2/19/2025</button>
        <button class="note" aria-label="Notifications">${icon("note", 18)}</button>
        <span class="peek"></span>
      </div>`;
  }
}

@customElement("app-root")
class AppRoot extends LitElement {
  static styles = css`
    :host { display: flex; flex-direction: column; height: 100vh; overflow: hidden; }
    .desk { position: relative; flex: 1; min-height: 0; }
    explorer-window { position: absolute; left: 283px; right: 211px; top: 14px; bottom: 73px; box-shadow: 0 0 2px rgba(0, 0, 0, .2); }
    .mark { position: absolute; right: 47px; bottom: 6px; display: flex; align-items: center; gap: 6px; color: rgba(255, 255, 255, .75); font: 38px/40px "Roboto Condensed", "Open Sans Condensed", "Liberation Sans Narrow", "Liberation Sans", sans-serif; text-shadow: 0 1px 3px rgba(0, 0, 0, .3); }
    .mark svg { filter: drop-shadow(0 0 2px rgba(0, 0, 0, .3)); }
  `;
  render() {
    return html`
      <div class="desk">
        <browser-window></browser-window>
        <explorer-window></explorer-window>
        <div class="mark">ANY
          <svg width="58" height="64" viewBox="0 0 58 64" fill="none" stroke="#fff" stroke-opacity=".85" stroke-width="4">
            <path d="M4 46V10h8M18 40V4l36 24v6L16 60v-8l28-20L18 14"/>
          </svg>RUN</div>
      </div>
      <task-bar></task-bar>`;
  }
}
